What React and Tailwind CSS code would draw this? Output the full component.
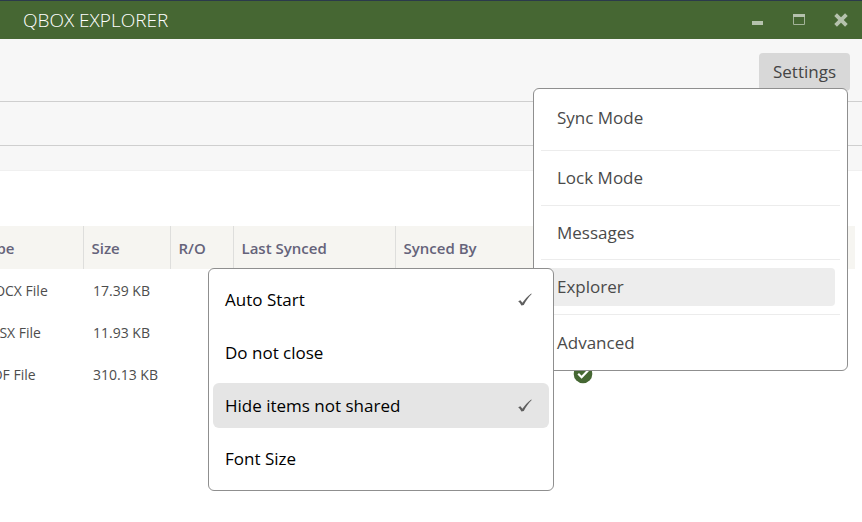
const columns = [
  { name: "Type", width: "w-[115px]" },
  { name: "Size", width: "w-[87px]" },
  { name: "R/O", width: "w-[63px]" },
  { name: "Last Synced", width: "w-[162px]" },
  { name: "Synced By", width: "w-[160px]" },
  { name: "", width: "" },
];

const files = [
  { type: "DOCX File", size: "17.39 KB" },
  { type: "XLSX File", size: "11.93 KB" },
  { type: "PDF File", size: "310.13 KB" },
];

const explorerOptions = [
  { label: "Auto Start", checked: true },
  { label: "Do not close" },
  { label: "Hide items not shared", checked: true, active: true },
  { label: "Font Size" },
];

function Check() {
  return (
    <svg width="16" height="16" viewBox="0 0 16 16" aria-hidden="true">
      <path d="M1.2 9.3 L3.4 8.2 L5.4 10.8 C7.6 7.4 10.4 4.4 14.2 1.4 L14.7 1.9 C11.4 5.2 8.9 8.8 6.8 13 L4.4 13.4 C3.5 11.7 2.5 10.3 1.2 9.3 Z" fill="#5f5f5f" />
    </svg>
  );
}

function SyncedBadge() {
  return (
    <svg className="block" width="20" height="20" viewBox="0 0 20 20" role="img" aria-label="Synced">
      <circle cx="10" cy="10" r="9.3" fill="#456733" />
      <path d="M5.2 9.8 L8.6 13.2 L15 6.4" fill="none" stroke="#fff" strokeWidth="2.2" />
    </svg>
  );
}

function TitleBar() {
  return (
    <header className="flex h-[39px] items-center justify-between border-t border-[#2b3a4b] bg-[#466733] pr-3.5 pl-[23px]">
      <h1 className="text-[19px] leading-6 font-light text-white">QBOX EXPLORER</h1>
      <div className="flex items-center gap-[29px]">
        <button aria-label="Minimize">
          <svg className="block" width="12" height="14" viewBox="0 0 12 14">
            <path d="M0 8h11v4H0z" fill="#b5c2ad" />
          </svg>
        </button>
        <button aria-label="Maximize">
          <svg className="block" width="12" height="14" viewBox="0 0 12 14">
            <path d="M0 1h12v3H0z" fill="#b5c2ad" />
            <path d="M.5 4v7.5h11V4" fill="none" stroke="#a3b399" />
          </svg>
        </button>
        <button aria-label="Close">
          <svg className="block" width="14" height="14" viewBox="0 0 14 14">
            <path d="M1.6 1.6l10.8 10.8M12.4 1.6L1.6 12.4" stroke="#b5c2ad" strokeWidth="3.8" />
          </svg>
        </button>
      </div>
    </header>
  );
}

function ExplorerMenu() {
  return (
    <div role="menu" aria-label="Explorer" className="absolute top-2 right-[286px] flex w-[346px] flex-col gap-2 rounded-md border border-[#8f8f8f] bg-white px-1 pt-2 pb-[9px] text-black">
      {explorerOptions.map((o) => (
        <button
          key={o.label}
          role={o.checked ? "menuitemcheckbox" : "menuitem"}
          aria-checked={o.checked}
          className={`flex h-[45px] items-center justify-between rounded-md pr-4 pl-3 ${o.active ? "bg-[#e5e5e5]" : ""}`}
        >
          {o.label}
          {o.checked && <Check />}
        </button>
      ))}
    </div>
  );
}

function SettingsMenu() {
  return (
    <div role="menu" aria-label="Settings" className="absolute top-[35px] right-0.5 w-[315px] rounded-md border border-[#8f8f8f] bg-white px-[7px] text-[#4a4a4a]">
      <div className="flex h-[62px] items-center border-b border-[#ececec] pb-1">
        <button role="menuitem" className="flex-1 px-4 text-left">Sync Mode</button>
      </div>
      <div className="flex h-[55px] items-center border-b border-[#ececec]">
        <button role="menuitem" className="flex-1 px-4 text-left">Lock Mode</button>
      </div>
      <div className="flex h-[54px] items-center border-b border-[#ececec]">
        <button role="menuitem" className="flex-1 px-4 text-left">Messages</button>
      </div>
      <div className="relative flex h-[55px] items-center border-b border-[#ececec]">
        <button role="menuitem" aria-haspopup="menu" aria-expanded="true" className="mr-[5px] h-[38px] flex-1 rounded bg-[#ededed] px-4 text-left">
          Explorer
        </button>
        <ExplorerMenu />
      </div>
      <div className="flex h-[55px] items-center">
        <button role="menuitem" className="flex-1 px-4 text-left">Advanced</button>
      </div>
    </div>
  );
}

function FileTable() {
  return (
    <div className="overflow-hidden pr-[7px]">
      <table className="-ml-8 w-[calc(100%+32px)] table-fixed border-collapse text-left text-[15px] leading-5">
        <thead>
          <tr className="h-[43px] bg-[#f6f5f1] text-[#65637a]">
            {columns.map((c, i) => (
              <th
                key={c.name}
                className={`${c.width} font-semibold ${i === 0 ? "pl-3" : "pl-2"} ${i < 4 ? "border-r border-[#dededc]" : ""}`}
              >
                {c.name}
              </th>
            ))}
          </tr>
        </thead>
        <tbody className="text-[14px] text-[#4d4d4d]">
          {files.map((f) => (
            <tr key={f.type} className="h-[42px]">
              <td className="pt-0.5 pl-4">{f.type}</td>
              <td className="pt-0.5 pl-2.5">{f.size}</td>
              <td />
              <td />
              <td />
              <td className="pb-px pl-[18px]"><SyncedBadge /></td>
            </tr>
          ))}
        </tbody>
      </table>
    </div>
  );
}

export default function App() {
  return (
    <div className="min-h-screen bg-white font-['Open_Sans','Noto_Sans',sans-serif] text-[17px] leading-6">
      <TitleBar />
      <div className="border-b border-[#f0f0f0] bg-[#f7f7f7]">
        <div className="flex h-[63px] items-start justify-end border-b border-[#cfcfcf] pt-3.5 pr-3">
          <div className="relative z-10">
            <button aria-haspopup="menu" aria-expanded="true" className="h-[38px] w-[91px] rounded bg-[#d8d8d8] text-[#444]">
              Settings
            </button>
            <SettingsMenu />
          </div>
        </div>
        <div className="h-11 border-b border-[#cfcfcf]" />
        <div className="h-6" />
      </div>
      <main className="pt-[55px]">
        <FileTable />
      </main>
    </div>
  );
}
